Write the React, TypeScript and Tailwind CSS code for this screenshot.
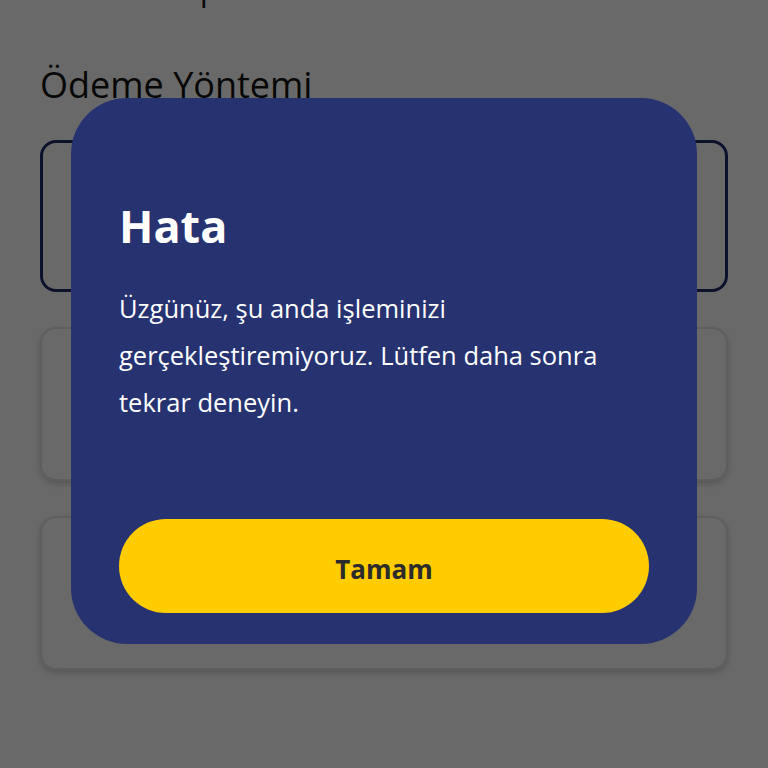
import { useState } from 'react'

const font = { fontFamily: '"Open Sans", "Noto Sans", sans-serif' }

function PaymentCard({ active }: { active?: boolean }) {
  return (
    <div
      className={
        active
          ? 'h-[152px] rounded-2xl border-[3px] border-[#1f2d6b] bg-white'
          : 'h-[154px] rounded-2xl border-2 border-[#e4e4e4] bg-white shadow-[0_3px_6px_rgba(0,0,0,0.18)]'
      }
    />
  )
}

export default function App() {
  const [open, setOpen] = useState(true)

  return (
    <div className="relative h-[768px] w-[768px] overflow-hidden bg-white" style={font}>
      <div className="px-10">
        <div className="-mt-[32px] text-[32px] leading-[40px] text-[#1a1a1a]">Teslimat Tipi</div>
        <h2 className="mt-[57px] text-[36px] leading-[40px] text-[#111]">Ödeme Yöntemi</h2>
        <div className="mt-[35px] flex flex-col gap-[35px]">
          <PaymentCard active />
          <PaymentCard />
          <PaymentCard />
        </div>
      </div>

      {open && (
        <div className="absolute inset-0 bg-black/[0.59]">
          <div className="ml-[71px] mt-[98px] w-[626px] rounded-[56px] bg-[#273270] px-12 pt-[102px] pb-[31px]">
            <h1 className="text-[45px] font-bold leading-[52px] text-white">Hata</h1>
            <p className="mt-[33px] text-[25.5px] leading-[47px] text-white">
              Üzgünüz, şu anda işleminizi gerçekleştiremiyoruz. Lütfen daha sonra tekrar deneyin.
            </p>
            <button
              onClick={() => setOpen(false)}
              className="mt-[93px] flex h-[94px] w-full items-center justify-center rounded-full bg-[#ffcc00] pt-[6px] text-[26px] font-bold text-[#2b2b2b]"
            >
              Tamam
            </button>
          </div>
        </div>
      )}
    </div>
  )
}
